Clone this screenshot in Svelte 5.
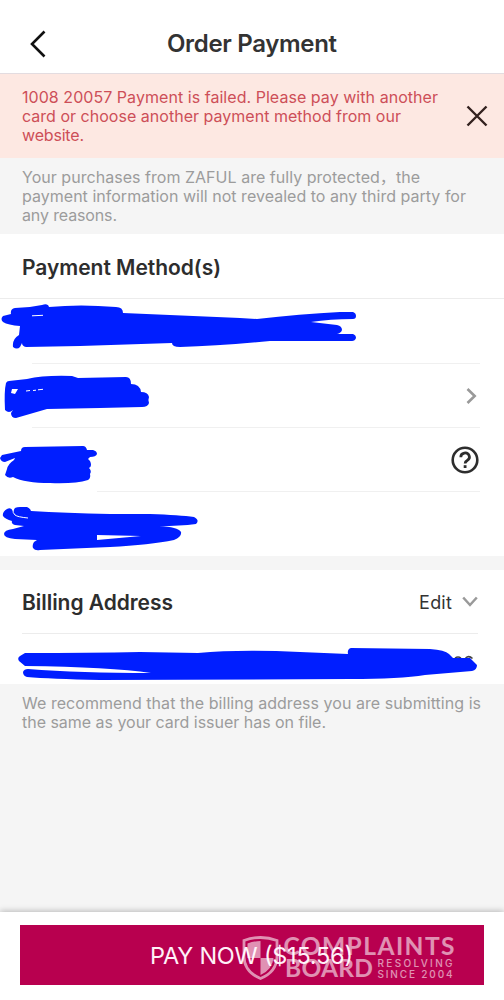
<script>
	const amount = '$15.56';

	const alertLines = [
		{ text: '1008 20057 Payment is failed. Please pay with another', width: 416 },
		{ text: 'card or choose another payment method from our', width: 379 },
		{ text: 'website.', width: 62 }
	];
	const noticeLines = [
		{ text: 'Your purchases from ZAFUL are fully protected，the', width: 398 },
		{ text: 'payment information will not revealed to any third party for', width: 444 },
		{ text: 'any reasons.', width: 95 }
	];
	const tipLines = [
		{ text: 'We recommend that the billing address you are submitting is', width: 459 },
		{ text: 'the same as your card issuer has on file.', width: 304 }
	];
</script>

{#snippet lines(items)}
	{#each items as line}
		<svg class="line" width={line.width} height="19">
			<text x="0" y="15.3" textLength={line.width}>{line.text}</text>
		</svg>
	{/each}
{/snippet}

<div class="page">
	<header>
		<svg class="back" width="16" height="28" viewBox="0 0 16 28">
			<path d="M14.500 1.500 2 14l12.500 12.500" fill="none" stroke="#111" stroke-width="2.600" />
		</svg>
		<h1>
			<svg width="170" height="30">
				<text x="0" y="22.500" textLength="170">Order Payment</text>
			</svg>
		</h1>
	</header>

	<div class="alert">
		<p>{@render lines(alertLines)}</p>
		<svg width="22" height="22" viewBox="0 0 22 22">
			<path d="M1.500 1.500l19 19M20.500 1.500l-19 19" stroke="#33211f" stroke-width="2.400" />
		</svg>
	</div>

	<p class="notice">{@render lines(noticeLines)}</p>

	<section class="methods">
		<h2>
			<svg width="199" height="28">
				<text x="0" y="21.500" textLength="199">Payment Method(s)</text>
			</svg>
		</h2>
		<div class="row">
			<svg class="scribble" width="504" height="64" viewBox="0 299 504 64">
				<path
					d="M15 308Q28 308 42 305Q48 303 49 307Q80 304 116 307Q123 307 123 313L240 318L257 319Q300 314 340 312L353 312Q356 313 356 316Q356 319 353 319Q330 319 311 322L337 325Q342 326 342 330Q341 333 337 334L353 334Q356 335 356 338Q355 341 352 341L270 341Q220 346 180 347Q172 347 172 343L80 346L26 347Q22 346 22 343L20 347Q17 350 13 347Q12 339 19 335L20 326Q8 325 3 322Q0 319 3 316L11 314Q10 309 15 308Z"
				/>
				<path class="gap" d="M32 315.800L43 315.300" />
			</svg>
		</div>
		<div class="row">
			<svg class="scribble" width="504" height="64" viewBox="0 363 504 64">
				<path
					fill-rule="evenodd"
					d="M9 381L27 379Q44 375 72 376L78 378L126 377Q131 377 131 384Q140 384 141 392Q148 392 149 397Q148 399 149 403Q148 407 142 407L100 408L47 409L16 418Q11 418 11 413L13 410Q9 414 5 410Q4 391 6 383Q7 381 9 381ZM12 389L11 393L15 394L18 389Z"
				/>
				<path class="gap" d="M26 391l4-.5M33 390.500l3-.3M38 389.800l5-.5" />
			</svg>
			<svg class="next" width="11" height="16" viewBox="0 0 11 16">
				<path d="M1.500 1l7.200 7-7.200 7" fill="none" stroke="#999" stroke-width="2.600" />
			</svg>
		</div>
		<div class="row short">
			<svg class="scribble" width="504" height="64" viewBox="0 427 504 64">
				<path
					d="M2 455L21 451Q21 447 25 447L83 446Q86 446 87 450L93 450Q97 451 97 454Q96 457 90 457L88 459Q91 461 91 465Q91 467 89 468Q92 471 90 474Q91 478 88 480Q75 484 50 483Q25 483 13 477Q8 479 5 475L7 469Q8 464 14 460L15 458L5 462Q1 462 0 458Z"
				/>
			</svg>
			<svg class="help" width="30" height="30" viewBox="0 0 30 30">
				<circle cx="15" cy="15" r="12.300" fill="none" stroke="#2d2d2d" stroke-width="2.600" />
				<path
					d="M10.800 12.200a4.300 4 0 1 1 6.400 3.300c-1.600.9-2.100 1.500-2.100 3.100"
					fill="none"
					stroke="#2d2d2d"
					stroke-width="2.700"
				/>
				<path d="M13.700 20.200h2.800v2.800h-2.800z" fill="#2d2d2d" />
			</svg>
		</div>
		<div class="row">
			<svg class="scribble" width="504" height="65" viewBox="0 491 504 65">
				<path
					fill-rule="evenodd"
					d="M7 509Q11 507 13 511L14 510Q14 507 20 507L27 507Q30 508 31 511Q65 513 110 514L150 514Q180 515 194 517Q200 520 196 524Q180 526 159 526Q178 527 181 532Q182 537 174 540Q150 545 110 547L40 550Q35 551 33 548Q32 545 34 542L37 540L15 539Q4 538 4 534Q4 530 13 529L24 526L15 525Q11 524 12 521Q5 519 3 516Q2 512 7 509ZM97 535L97 540L141 536Z"
				/>
				<path class="gap" d="M13 509q-.5 4 2 6t13 3" />
			</svg>
		</div>
	</section>

	<section class="billing">
		<div class="billing-head">
			<h2>
				<svg width="151" height="28">
					<text x="0" y="22" textLength="151">Billing Address</text>
				</svg>
			</h2>
			<div class="edit">
				<span>Edit</span>
				<svg width="16" height="12" viewBox="0 0 16 12">
					<path d="M1.200 1.500L8 9l6.800-7.500" fill="none" stroke="#999" stroke-width="2.500" />
				</svg>
			</div>
		</div>
		<div class="row address">
			<svg class="scribble" width="504" height="51" viewBox="0 633 504 51">
				<path class="remains" d="M455 657q3-2 6 0M465.500 657q3.500-3 7 .5" />
				<path
					d="M25 652Q90 652 140 651L198 652Q240 648 300 651L348 653Q347 648 351 647L430 648Q445 649 449 653L453 657L470 657L477 664Q477 669 472 670L425 674Q400 678 350 678L100 679Q50 678 27 676Q23 675 23 671Q24 668 28 668Q80 672 151 672Q110 666 25 665L19 660Q17 657 20 655Z"
				/>
			</svg>
		</div>
	</section>

	<p class="tip">{@render lines(tipLines)}</p>

	<footer>
		<button>
			<svg width="204" height="32">
				<text x="0" y="24.500" textLength="203">PAY NOW ({amount})</text>
			</svg>
		</button>
		<svg class="watermark" width="216" height="50" viewBox="240 933 216 50">
			<path
				d="M244 940.500Q252 937.500 260.500 937.500Q269 937.500 277 940.500V957Q276.500 972 260.500 978.500Q244.500 972 244 957Z"
				fill="none"
				stroke="#fff"
				stroke-width="2.800"
			/>
			<path
				d="M247.500 943.500Q254 941 260.500 941V958H247.500ZM260.500 958H273.500Q272.500 969.500 260.500 975Z"
				fill="#fff"
			/>
			<text x="283.500" y="954.500" font-size="24.500" textLength="171">COMPLAINTS</text>
			<text x="285" y="977" font-size="24.500" textLength="88">BOARD</text>
			<text class="small" x="377.500" y="967" textLength="75">RESOLVING</text>
			<text class="small" x="377.500" y="977.500" textLength="75">SINCE 2004</text>
		</svg>
	</footer>
</div>

<style>
	:global(body) {
		margin: 0;
	}

	.page {
		display: flex;
		flex-direction: column;
		width: 504px;
		height: 1000px;
		overflow: hidden;
		background: #f5f5f5;
		color: #2d2d2d;
		font-family: Inter, 'Noto Sans CJK SC', sans-serif;
	}

	svg {
		display: block;
		flex: none;
		overflow: visible;
	}

	text {
		fill: currentColor;
	}

	h1,
	h2,
	p {
		margin: 0;
	}

	header {
		display: grid;
		grid-template-columns: 167px 170px 1fr;
		align-items: center;
		box-sizing: border-box;
		height: 74px;
		padding-top: 14px;
		border-bottom: 1px solid #e3dce0;
		background: #fff;
	}

	.back {
		margin-left: 30px;
	}

	h1 {
		color: #333;
		font-size: 24px;
		font-weight: 600;
	}

	.alert {
		display: flex;
		align-items: center;
		justify-content: space-between;
		box-sizing: border-box;
		height: 84px;
		padding: 0 16px 0 22px;
		background: #fde8e2;
		color: #cd4f58;
		font-size: 16px;
	}

	.notice {
		box-sizing: border-box;
		height: 76px;
		padding: 10px 22px 0;
		color: #9c9c9c;
		font-size: 16px;
	}

	section {
		background: #fff;
	}

	h2 {
		font-size: 21px;
		font-weight: 600;
	}

	.methods h2 {
		box-sizing: border-box;
		height: 65px;
		padding: 19px 22px 0;
		border-bottom: 1px solid #ececec;
	}

	.row {
		position: relative;
		display: flex;
		align-items: center;
		justify-content: flex-end;
		height: 64px;
	}

	/* inset divider under a row */
	.row:not(:last-child)::after {
		content: '';
		position: absolute;
		right: 24px;
		bottom: -1px;
		left: 32px;
		height: 1px;
		background: #f0f0f0;
	}

	.row.short::after {
		left: 97px;
	}

	.scribble {
		position: absolute;
		top: 0;
		left: 0;
		fill: #001eff;
	}

	.gap {
		fill: none;
		stroke: #fff;
		stroke-width: 1;
	}

	.remains {
		fill: none;
		stroke: #444;
		stroke-width: 1.5;
	}

	.next {
		margin-right: 27px;
		margin-top: 1px;
	}

	.help {
		margin-right: 24px;
		margin-top: 2px;
	}

	.methods .row:last-child {
		height: 65px;
	}

	.billing {
		margin-top: 14px;
	}

	.billing-head {
		display: flex;
		align-items: center;
		justify-content: space-between;
		box-sizing: border-box;
		height: 64px;
		margin: 0 26px 0 22px;
		border-bottom: 1px solid #ececec;
	}

	.edit {
		display: flex;
		align-items: center;
		gap: 10px;
		padding-top: 1px;
		color: #333;
		font-size: 18px;
		letter-spacing: 0.2px;
	}

	.address {
		height: 50px;
	}

	.tip {
		flex: 1;
		padding: 10px 22px 0;
		color: #9c9c9c;
		font-size: 16px;
	}

	footer {
		position: relative;
		box-sizing: border-box;
		height: 88px;
		padding: 13px 20px 0;
		background: #fff;
		box-shadow: 0 -1px 6px rgba(0, 0, 0, 0.25);
	}

	button {
		display: flex;
		align-items: center;
		width: 464px;
		height: 60px;
		padding: 0 0 0 130px;
		border: 0;
		background: #b8004f;
		color: #fff0f8;
		font-family: inherit;
		font-size: 23.5px;
	}

	.watermark {
		position: absolute;
		top: 21px;
		left: 240px;
		color: #fff;
		font-family: Lato, sans-serif;
		font-weight: 700;
		opacity: 0.57;
	}

	.small {
		font-family: Inter, sans-serif;
		font-size: 10px;
		font-weight: 500;
	}
</style>
